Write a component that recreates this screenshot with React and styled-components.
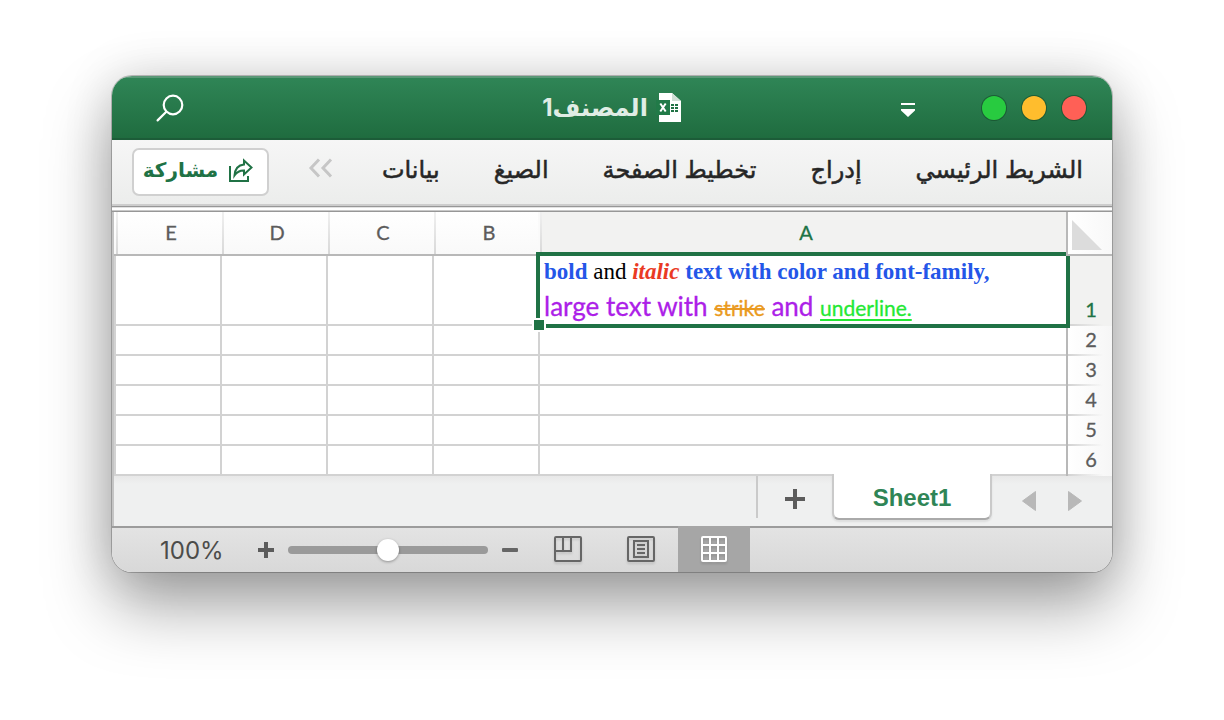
import React, { useState } from "react";
import styled, { createGlobalStyle, css } from "styled-components";

const GREEN = "#207245";
const LINE = "#d2d2d2";
const ARABIC = `"Inter", "DejaVu Sans", sans-serif`;
const CALIBRI = `"Lato", "Liberation Sans", sans-serif`;

const GlobalStyle = createGlobalStyle`
  *, *::before, *::after { box-sizing: border-box; }
  body { margin: 0; background: #fff; font-family: ${ARABIC}; }
  button { margin: 0; padding: 0; border: 0; background: none; font: inherit; color: inherit; }
  svg { display: block; }
`;

const Desktop = styled.div`
  padding: 76px 112px 144px;
  overflow: hidden;
`;

const Window = styled.main`
  overflow: hidden;
  border-radius: 20px;
  background: #fff;
  box-shadow: 0 0 0 1px rgba(0, 0, 0, 0.22), 0 34px 66px rgba(0, 0, 0, 0.36), 0 0 50px rgba(0, 0, 0, 0.14);
`;

const TitleBar = styled.header`
  display: grid;
  grid-template-columns: 1fr auto 1fr;
  align-items: center;
  height: 64px;
  padding: 0 26px;
  background: linear-gradient(#2f8556, #1f6c3f);
  border-top: 2px solid #5a9877;
  border-bottom: 2px solid #1c5c38;
  color: #fff;
`;

const WindowControls = styled.div`
  display: flex;
  align-items: center;
  gap: 16px;
`;

const Light = styled.button`
  width: 24px;
  height: 24px;
  border-radius: 50%;
  background: ${(p) => p.$color};
  box-shadow: 0 0 0 1px rgba(20, 70, 40, 0.6);
`;

const QuickAccess = styled.button`
  margin-right: 51px;
`;

const Title = styled.h1`
  display: flex;
  align-items: center;
  gap: 8px;
  margin: 0;
  font-size: 24px;
  font-weight: 700;
  line-height: 32px;
  color: #e0ede5;
`;

const SearchButton = styled.button`
  justify-self: end;
  margin-left: 18px;
`;

const Ribbon = styled.nav`
  display: flex;
  align-items: center;
  height: 64px;
  padding: 0 29px 0 20px;
  background: linear-gradient(#f6f6f6, #ecedec);
`;

const RibbonTabs = styled.div`
  display: flex;
  gap: 54px;
  padding-bottom: 4px;
`;

const RibbonTab = styled.button`
  font-size: 24px;
  font-weight: 400;
  line-height: 32px;
  white-space: nowrap;
  color: #262626;
  -webkit-text-stroke: 0.5px;
`;

const MoreButton = styled.button`
  margin-right: 48px;
  padding-bottom: 8px;
`;

const ShareButton = styled.button`
  display: flex;
  align-items: center;
  justify-content: center;
  gap: 10px;
  width: 137px;
  height: 48px;
  margin-right: auto;
  padding: 0 4px 4px 0;
  border: 2px solid #d0d0d0;
  border-radius: 7px;
  background: #fff;
  color: ${GREEN};
  font-size: 20px;
  font-weight: 700;
  line-height: 32px;
`;

const Divider = styled.div`
  height: 8px;
  background: linear-gradient(
    #cdcdcd 0 2px, #979797 2px 3px, #e2e2e2 3px 4px, #fff 4px 6px, #c8c8c8 6px 7px, #979797 7px 8px
  );
`;

const Grid = styled.table`
  width: 100%;
  table-layout: fixed;
  border-collapse: separate;
  border-spacing: 0;
  border-left: 2px solid #c4c4c4;
  font-family: ${CALIBRI};
  font-size: 20px;
`;

const RowHeadCol = styled.col`
  width: 46px;
`;

const NarrowCol = styled.col`
  width: 106px;
`;

const Corner = styled.td`
  position: relative;
  z-index: 2;
  height: 44px;
  padding: 0 0 4px;
  border-left: 2px solid #b8b8b8;
  border-bottom: 2px solid #b8b8b8;
  background: linear-gradient(to right, #fff, #f8f8f8);
  vertical-align: bottom;
`;

const ColumnHead = styled.th`
  height: 44px;
  padding: 0 0 2px 8px;
  border-bottom: 2px solid #b8b8b8;
  background: linear-gradient(#f0f0f0, #d8d8d8) 2px 0 / 2px 100% no-repeat,
    ${(p) => (p.$active ? "linear-gradient(#f2f2f1, #f2f2f1) 2px 0 no-repeat, #fafafa" : "linear-gradient(#fff, #f9f9f9)")};
  color: ${(p) => (p.$active ? GREEN : "#5c5c5c")};
  font-weight: 400;
  -webkit-text-stroke: 0.3px;
`;

const RowHead = styled.th`
  height: ${(p) => (p.$active ? 70 : 30)}px;
  padding: 0 0 4px 2px;
  border-left: 2px solid #b8b8b8;
  background: linear-gradient(to right, ${LINE}, rgba(210, 210, 210, 0) 80%) 0 100% / 100% 2px no-repeat,
    ${(p) => (p.$active ? "#f2f2f1" : "linear-gradient(to right, #fff, #f6f6f6)")};
  color: ${(p) => (p.$active ? GREEN : "#5c5c5c")};
  font-weight: 400;
  line-height: 26px;
  vertical-align: bottom;
  -webkit-text-stroke: 0.3px;
`;

const Cell = styled.td`
  padding: 0;
  border-left: 2px solid ${LINE};
  border-bottom: 2px solid ${LINE};
  background: #fff;
  ${(p) => p.$selected && css`
    position: relative;
    z-index: 1;
    vertical-align: top;
  `}
`;

const Selection = styled.div`
  position: absolute;
  inset: -4px;
  border: 4px solid ${GREEN};
  pointer-events: none;

  &::after {
    content: "";
    position: absolute;
    left: -6px;
    bottom: -6px;
    width: 10px;
    height: 10px;
    background: ${GREEN};
    box-shadow: 0 0 0 2px #fff;
  }
`;

const TextLine = styled.div`
  direction: ltr;
  height: ${(p) => (p.$large ? 36 : 32)}px;
  padding-left: 4px;
  text-align: left;
  white-space: nowrap;
  line-height: ${(p) => (p.$large ? 36 : 30)}px;
`;

const SERIF = `"Liberation Serif", serif`;
const Bold = styled.b`
  color: #2456e8;
  font-family: ${SERIF};
  font-size: 23px;
`;
const Plain = styled.span`
  color: #000;
  font-family: ${SERIF};
  font-size: 23px;
`;
const Italic = styled.em`
  color: #ea3a24;
  font-family: ${SERIF};
  font-size: 23px;
  font-weight: 700;
`;
const Large = styled.span`
  color: #ac20e8;
  font-size: 26px;
  -webkit-text-stroke: 0.3px;
`;
const Strike = styled.s`
  color: #ea9a20;
  font-size: 21px;
  -webkit-text-stroke: 0.3px;
`;
const Underline = styled.u`
  color: #24e834;
  font-size: 21px;
  text-decoration-thickness: 2px;
  text-underline-offset: 3px;
  -webkit-text-stroke: 0.3px;
`;

const SheetBar = styled.nav`
  display: flex;
  align-items: flex-start;
  height: 50px;
  padding-right: 30px;
  border-left: 2px solid #c4c4c4;
  background: linear-gradient(#e8e8e8, #eff0f0 8px);
`;

const SheetArrow = styled.button`
  margin: 15px 0 0 32px;
`;

const SheetTab = styled.button`
  position: relative;
  width: 160px;
  height: 46px;
  margin: -2px -2px 0 0;
  padding: 3px 0 0;
  border: 2px solid #cacaca;
  border-top: 0;
  border-bottom-color: #aaa;
  border-radius: 0 0 7px 7px;
  background: #fff;
  box-shadow: 0 2px 2px rgba(0, 0, 0, 0.08);
  color: #2f8556;
  font-family: "Liberation Sans", Arial, sans-serif;
  font-size: 24px;
  font-weight: 700;
`;

const AddSheet = styled.button`
  display: flex;
  align-items: center;
  justify-content: center;
  width: 76px;
  height: 42px;
  padding-top: 4px;
  border-left: 2px solid #cacaca;
`;

const StatusBar = styled.footer`
  display: flex;
  direction: ltr;
  align-items: center;
  height: 46px;
  padding-left: 48px;
  border-top: 2px solid #9c9c9c;
  background: linear-gradient(#e3e3e3, #d8d8d8);
  color: #4c4c4a;
`;

const ZoomValue = styled.output`
  width: 98px;
  padding-top: 2px;
  font-size: 24px;
  line-height: 32px;
`;

const ZoomSlider = styled.input`
  direction: rtl;
  appearance: none;
  width: 200px;
  height: 22px;
  margin: 0 14px;
  background: transparent;

  &::-webkit-slider-runnable-track {
    height: 8px;
    border-radius: 4px;
    background: #9a9a9a;
  }

  &::-webkit-slider-thumb {
    appearance: none;
    width: 22px;
    height: 22px;
    margin-top: -7px;
    border-radius: 50%;
    background: #fff;
    box-shadow: 0 1px 3px rgba(0, 0, 0, 0.35);
  }
`;

const Views = styled.div`
  display: flex;
  align-self: stretch;
  gap: 1px;
  margin: -2px 0 0 14px;
`;

const ViewButton = styled.button`
  display: flex;
  align-items: center;
  justify-content: center;
  width: 72px;
  background: ${(p) => (p.$active ? "#a6a6a6" : "transparent")};
  color: ${(p) => (p.$active ? "#fff" : "#666")};

  svg {
    filter: drop-shadow(0 2px 1px rgba(0, 0, 0, 0.12));
  }
`;

const SearchIcon = () => (
  <svg width="28" height="28" viewBox="0 0 28 28" fill="none" stroke="#fff" strokeWidth="2.2" strokeLinecap="round">
    <circle cx="17" cy="11" r="9.3" />
    <path d="M10.3 17.8 L1.6 26.4" />
  </svg>
);

const MenuIcon = () => (
  <svg width="14" height="18" viewBox="0 0 14 18" fill="#fff">
    <path d="M0 4h14v2H0zM0 10h14v1.500L7 18 0 11.500z" />
  </svg>
);

const WorkbookIcon = () => (
  <svg width="26" height="30" viewBox="0 0 26 30">
    <path d="M3 0h13l9 8v21H3z" fill="#fff" />
    <path d="M16 0v8h9z" fill="#cfe0d6" />
    <path d="M15 11h3v2h-3zM19 11h3v2h-3zM15 14h3v2h-3zM19 14h3v2h-3zM15 17h3v2h-3zM19 17h3v2h-3z" fill={GREEN} />
    <path d="M0 7h14v15H0z" fill="#217a48" />
    <path d="M4.300 10.500l5.400 8M9.700 10.500l-5.400 8" stroke="#fff" strokeWidth="2" />
  </svg>
);

const ShareIcon = () => (
  <svg width="26" height="26" viewBox="0 0 26 26" fill="none" stroke={GREEN} strokeWidth="2">
    <path d="M2 9v15h18v-5" />
    <path d="M6.500 18.500C7 11.500 10.500 8 16 7.500V3.500l7.500 7-7.500 7v-4c-4-.2-7 1.500-9.500 5z" />
  </svg>
);

const ChevronsIcon = () => (
  <svg width="26" height="20" viewBox="0 0 26 20" fill="none" stroke="#c6c6c6" strokeWidth="3">
    <path d="M11 1.500L3 10l8 8.500M23 1.500L15 10l8 8.500" />
  </svg>
);

const CornerIcon = () => (
  <svg width="40" height="30" viewBox="0 0 40 30">
    <path d="M0 0v30h30z" fill="#dcdcdc" />
  </svg>
);

const ArrowIcon = ({ left }) => (
  <svg width="14" height="20" viewBox="0 0 14 20" fill="#b8b8b8" stroke="#b8b8b8" strokeLinejoin="round">
    <path d={left ? "M13.500 .5v19L.5 10z" : "M.5 .5v19L13.500 10z"} />
  </svg>
);

const PlusIcon = ({ size, weight }) => (
  <svg width={size} height={size} viewBox={`0 0 ${size} ${size}`} stroke="#5c5c5c" strokeWidth={weight}>
    <path d={`M0 ${size / 2}h${size}M${size / 2} 0v${size}`} />
  </svg>
);

const MinusIcon = () => (
  <svg width="16" height="4" viewBox="0 0 16 4">
    <rect width="16" height="4" rx="1" fill="#666" />
  </svg>
);

const BreakIcon = () => (
  <svg width="28" height="26" viewBox="0 0 28 26" fill="none" stroke="currentColor" strokeWidth="2">
    <rect x="1" y="1" width="26" height="24" rx="1" />
    <path d="M9 1v14M1 15h16V1" />
  </svg>
);

const PageIcon = () => (
  <svg width="28" height="26" viewBox="0 0 28 26" fill="none" stroke="currentColor" strokeWidth="2">
    <rect x="1" y="1" width="26" height="24" rx="1" />
    <path d="M7 5h14v16H7zM10 9h8M10 13h8M10 17h8" />
  </svg>
);

const GridIcon = () => (
  <svg width="26" height="26" viewBox="0 0 26 26" fill="none" stroke="currentColor" strokeWidth="2">
    <rect x="1" y="1" width="24" height="24" rx="1" />
    <path d="M9 1v24M17 1v24M1 9h24M1 17h24" />
  </svg>
);

const tabs = ["الشريط الرئيسي", "إدراج", "تخطيط الصفحة", "الصيغ", "بيانات"];
const columns = ["A", "B", "C", "D", "E"];
const rows = [1, 2, 3, 4, 5, 6];

function RichText() {
  return (
    <>
      <TextLine>
        <Bold>bold</Bold><Plain> and </Plain><Italic>italic</Italic>
        <Bold> text with color and font-family,</Bold>
      </TextLine>
      <TextLine $large>
        <Large>large text with </Large><Strike>strike</Strike><Large> and </Large>
        <Underline>underline.</Underline>
      </TextLine>
    </>
  );
}

export default function App() {
  const [zoom, setZoom] = useState(100);
  return (
    <Desktop dir="rtl" lang="ar">
      <GlobalStyle />
      <Window>
        <TitleBar>
          <WindowControls>
            <Light $color="#ff6056" aria-label="إغلاق" />
            <Light $color="#ffbd2d" aria-label="تصغير" />
            <Light $color="#28cb40" aria-label="تكبير" />
            <QuickAccess aria-label="تخصيص"><MenuIcon /></QuickAccess>
          </WindowControls>
          <Title><WorkbookIcon />المصنف1</Title>
          <SearchButton aria-label="بحث"><SearchIcon /></SearchButton>
        </TitleBar>
        <Ribbon>
          <RibbonTabs>
            {tabs.map((t) => <RibbonTab key={t}>{t}</RibbonTab>)}
          </RibbonTabs>
          <MoreButton aria-label="المزيد"><ChevronsIcon /></MoreButton>
          <ShareButton><ShareIcon />مشاركة</ShareButton>
        </Ribbon>
        <Divider />
        <Grid>
          <colgroup>
            <RowHeadCol />
            <col />
            {columns.slice(1).map((c) => <NarrowCol key={c} />)}
          </colgroup>
          <thead>
            <tr>
              <Corner><CornerIcon /></Corner>
              {columns.map((c) => <ColumnHead key={c} scope="col" $active={c === "A"}>{c}</ColumnHead>)}
            </tr>
          </thead>
          <tbody>
            {rows.map((r) => (
              <tr key={r}>
                <RowHead scope="row" $active={r === 1}>{r}</RowHead>
                {columns.map((c) => {
                  const selected = r === 1 && c === "A";
                  return (
                    <Cell key={c} $selected={selected}>
                      {selected && <><RichText /><Selection /></>}
                    </Cell>
                  );
                })}
              </tr>
            ))}
          </tbody>
        </Grid>
        <SheetBar>
          <SheetArrow aria-label="السابق"><ArrowIcon /></SheetArrow>
          <SheetArrow aria-label="التالي"><ArrowIcon left /></SheetArrow>
          <SheetTab>Sheet1</SheetTab>
          <AddSheet aria-label="إضافة ورقة"><PlusIcon size={20} weight={4} /></AddSheet>
        </SheetBar>
        <StatusBar>
          <ZoomValue>{zoom}%</ZoomValue>
          <button aria-label="تكبير العرض" onClick={() => setZoom(Math.min(190, zoom + 10))}><PlusIcon size={16} weight={4} /></button>
          <ZoomSlider type="range" min="10" max="190" value={zoom} aria-label="تكبير/تصغير" onChange={(e) => setZoom(Number(e.target.value))} />
          <button aria-label="تصغير العرض" onClick={() => setZoom(Math.max(10, zoom - 10))}><MinusIcon /></button>
          <Views>
            <ViewButton aria-label="معاينة فواصل الصفحات"><BreakIcon /></ViewButton>
            <ViewButton aria-label="تخطيط الصفحة"><PageIcon /></ViewButton>
            <ViewButton $active aria-label="عادي"><GridIcon /></ViewButton>
          </Views>
        </StatusBar>
      </Window>
    </Desktop>
  );
}
